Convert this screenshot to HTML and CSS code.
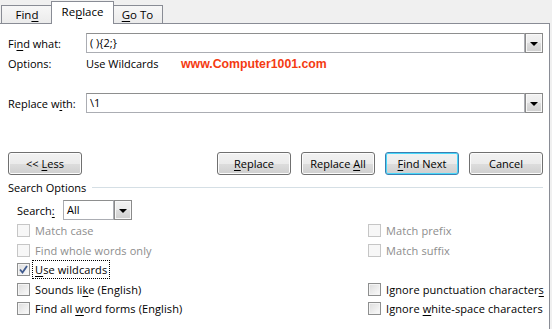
FILE: index.html
```html
<!DOCTYPE html>
<html lang="en">
<head>
    <meta charset="UTF-8">
    <title>Find and Replace</title>
    <link rel="stylesheet" href="styles.css">
</head>
<body>

    <!-- tab strip -->
    <div class="tabs">
        <div class="tab">Fin<u>d</u></div>
        <div class="tab active">Re<u>p</u>lace</div>
        <div class="tab goto"><u>G</u>o To</div>
    </div>

    <div class="panel">

        <!-- find what -->
        <div class="field-row find-row">
            <div class="label">Fi<u>n</u>d what:</div>
            <div class="combo">
                <div class="combo-text">( ){2;}</div>
                <div class="combo-btn"><span class="arrow"></span></div>
            </div>
        </div>

        <div class="options-row">
            <div class="label">Options:</div>
            <div class="opt-value">Use Wildcards</div>
            <div class="brand">www.Computer1001.com</div>
        </div>

        <!-- replace with -->
        <div class="field-row replace-row">
            <div class="label">Replace w<u>i</u>th:</div>
            <div class="combo">
                <div class="combo-text">\1</div>
                <div class="combo-btn"><span class="arrow"></span></div>
            </div>
        </div>

        <!-- buttons -->
        <div class="button-row">
            <button class="btn">&lt;&lt; <u>L</u>ess</button>
            <div class="btn-group">
                <button class="btn"><u>R</u>eplace</button>
                <button class="btn">Replace <u>A</u>ll</button>
                <button class="btn default"><u>F</u>ind Next</button>
                <button class="btn">Cancel</button>
            </div>
        </div>

        <div class="group-title"><span>Search Options</span><div class="group-line"></div></div>

        <div class="search-row">
            <div class="search-label">Search<u>:</u></div>
            <div class="select">
                <div class="select-text">All</div>
                <div class="combo-btn"><span class="arrow"></span></div>
            </div>
        </div>

        <!-- check boxes -->
        <div class="checks">
            <div class="check disabled"><span class="box"></span><span>Match case</span></div>
            <div class="check disabled"><span class="box"></span><span>Match prefix</span></div>

            <div class="check disabled"><span class="box"></span><span>Find whole words only</span></div>
            <div class="check disabled"><span class="box"></span><span>Match suffix</span></div>

            <div class="check"><span class="box checked"><svg width="9" height="9" viewBox="0 0 9 9"><path d="M1 4.5 L3.5 7.5 L8 1" fill="none" stroke="#3f5a8e" stroke-width="1.8"/></svg></span><span class="focus"><u>U</u>se wildcards</span></div>
            <div class="check empty"></div>

            <div class="check"><span class="box"></span><span>Sounds li<u>k</u>e (English)</span></div>
            <div class="check"><span class="box"></span><span>Ignore punctuation character<u>s</u></span></div>

            <div class="check"><span class="box"></span><span>Find all <u>w</u>ord forms (English)</span></div>
            <div class="check"><span class="box"></span><span>Ignore <u>w</u>hite-space characters</span></div>
        </div>

    </div>

</body>
</html>
```

FILE: styles.css
```css
body {
    margin: 0;
    width: 552px;
    height: 329px;
    overflow: hidden;
    background-color: #f0f0f0;
    font-family: "Open Sans", "Noto Sans", sans-serif;
    font-size: 11px;
    color: #000;
    display: flex;
    flex-direction: column;
}

u {
    text-decoration-thickness: 1px;
    text-underline-offset: 2px;
}

/* tabs */
.tabs {
    height: 23px;
    display: flex;
    align-items: flex-end;
    padding-left: 1px;
}

.tab {
    box-sizing: border-box;
    width: 52px;
    height: 18px;
    border: 1px solid #898c95;
    border-bottom: none;
    background: linear-gradient(#f7f7f7, #ebebeb);
    text-align: center;
    line-height: 17px;
    font-size: 11.5px;
}

.tab.active {
    width: 63px;
    height: 23px;
    margin-left: -2px;
    margin-bottom: -1px;
    background: #fff;
    position: relative;
    z-index: 1;
    line-height: 20px;
}

.tab.goto {
    width: 51px;
    margin-left: -2px;
}

.panel {
    flex-grow: 1;
    width: 550px;
    box-sizing: border-box;
    background-color: #fff;
    border-top: 1px solid #898c95;
    border-right: 1px solid #898c95;
    padding: 0 6px 0 8px;
}

/* text rows */
.field-row {
    display: flex;
    align-items: center;
    height: 20px;
}

.find-row {
    margin-top: 9px;
}

.replace-row {
    margin-top: 20px;
}

.label {
    width: 78px;
    flex-shrink: 0;
}

.combo {
    display: flex;
    width: 458px;
    height: 20px;
}

.combo-text {
    flex-grow: 1;
    box-sizing: border-box;
    border: 1px solid #abadb3;
    border-top-color: #8e8f8f;
    padding: 0 3px;
    line-height: 18px;
}

.combo-btn {
    box-sizing: border-box;
    width: 18px;
    height: 20px;
    border: 1px solid #8a8a8a;
    box-shadow: inset 0 0 0 1px #f8f8f8;
    background: linear-gradient(#f2f2f2 0%, #ebebeb 50%, #dddddd 51%, #cfcfcf 100%);
    display: flex;
    align-items: center;
    justify-content: center;
}

.arrow {
    width: 0;
    height: 0;
    border-left: 4px solid transparent;
    border-right: 4px solid transparent;
    border-top: 4px solid #000;
    margin-top: 1px;
}

.options-row {
    display: flex;
    align-items: center;
    height: 20px;
}

.opt-value {
    width: 95px;
}

.brand {
    font-family: "Liberation Sans", Arial, sans-serif;
    font-weight: bold;
    font-size: 12.3px;
    color: #f43b12;
    margin-top: 2px;
}

/* buttons */
.button-row {
    margin-top: 39px;
    display: flex;
    justify-content: space-between;
}

.btn-group {
    display: flex;
    gap: 10px;
}

.btn {
    box-sizing: border-box;
    width: 74px;
    height: 23px;
    padding: 0;
    border: 1px solid #707070;
    border-radius: 3px;
    background: linear-gradient(#f2f2f2 0%, #ebebeb 50%, #dddddd 51%, #cfcfcf 100%);
    box-shadow: inset 0 0 0 1px #fcfcfc;
    font-family: inherit;
    font-size: 11px;
    color: #000;
}

.btn.default {
    border-color: #3c7fb1;
    box-shadow: inset 0 0 0 1px #48d8fb;
}

/* search options group */
.group-title {
    margin-top: 4px;
    height: 16px;
    display: flex;
    align-items: center;
}

.group-line {
    flex-grow: 1;
    height: 1px;
    margin-left: 6px;
    background-color: #d5dfe5;
}

.search-row {
    margin-top: 5px;
    padding-left: 9px;
    display: flex;
    align-items: center;
    height: 20px;
}

.search-label {
    width: 46px;
}

.select {
    display: flex;
    width: 69px;
    height: 20px;
}

.select-text {
    flex-grow: 1;
    box-sizing: border-box;
    border: 1px solid #abadb3;
    border-top-color: #8e8f8f;
    padding: 0 3px;
    line-height: 18px;
}

/* check boxes */
.checks {
    margin-top: 1px;
    padding-left: 9px;
    display: grid;
    grid-template-columns: 351px 1fr;
    grid-auto-rows: 19.5px;
}

.check {
    display: flex;
    align-items: center;
    white-space: nowrap;
    letter-spacing: 0.1px;
}

.box {
    box-sizing: border-box;
    flex-shrink: 0;
    width: 13px;
    height: 13px;
    margin-right: 5px;
    border: 1px solid #8e8f8f;
    background: linear-gradient(135deg, #dcdcdc, #fbfbfb);
    box-shadow: inset 0 0 0 1px #f4f4f4;
    display: flex;
    align-items: center;
    justify-content: center;
}

.check.disabled {
    color: #8d8d8d;
}

.check.disabled .box {
    border-color: #c6c6c6;
    background: #f7f7f7;
    box-shadow: none;
}

.focus {
    outline: 1px dotted #000;
    outline-offset: 1px;
    margin-left: -1px;
    padding: 0 1px;
}
```
